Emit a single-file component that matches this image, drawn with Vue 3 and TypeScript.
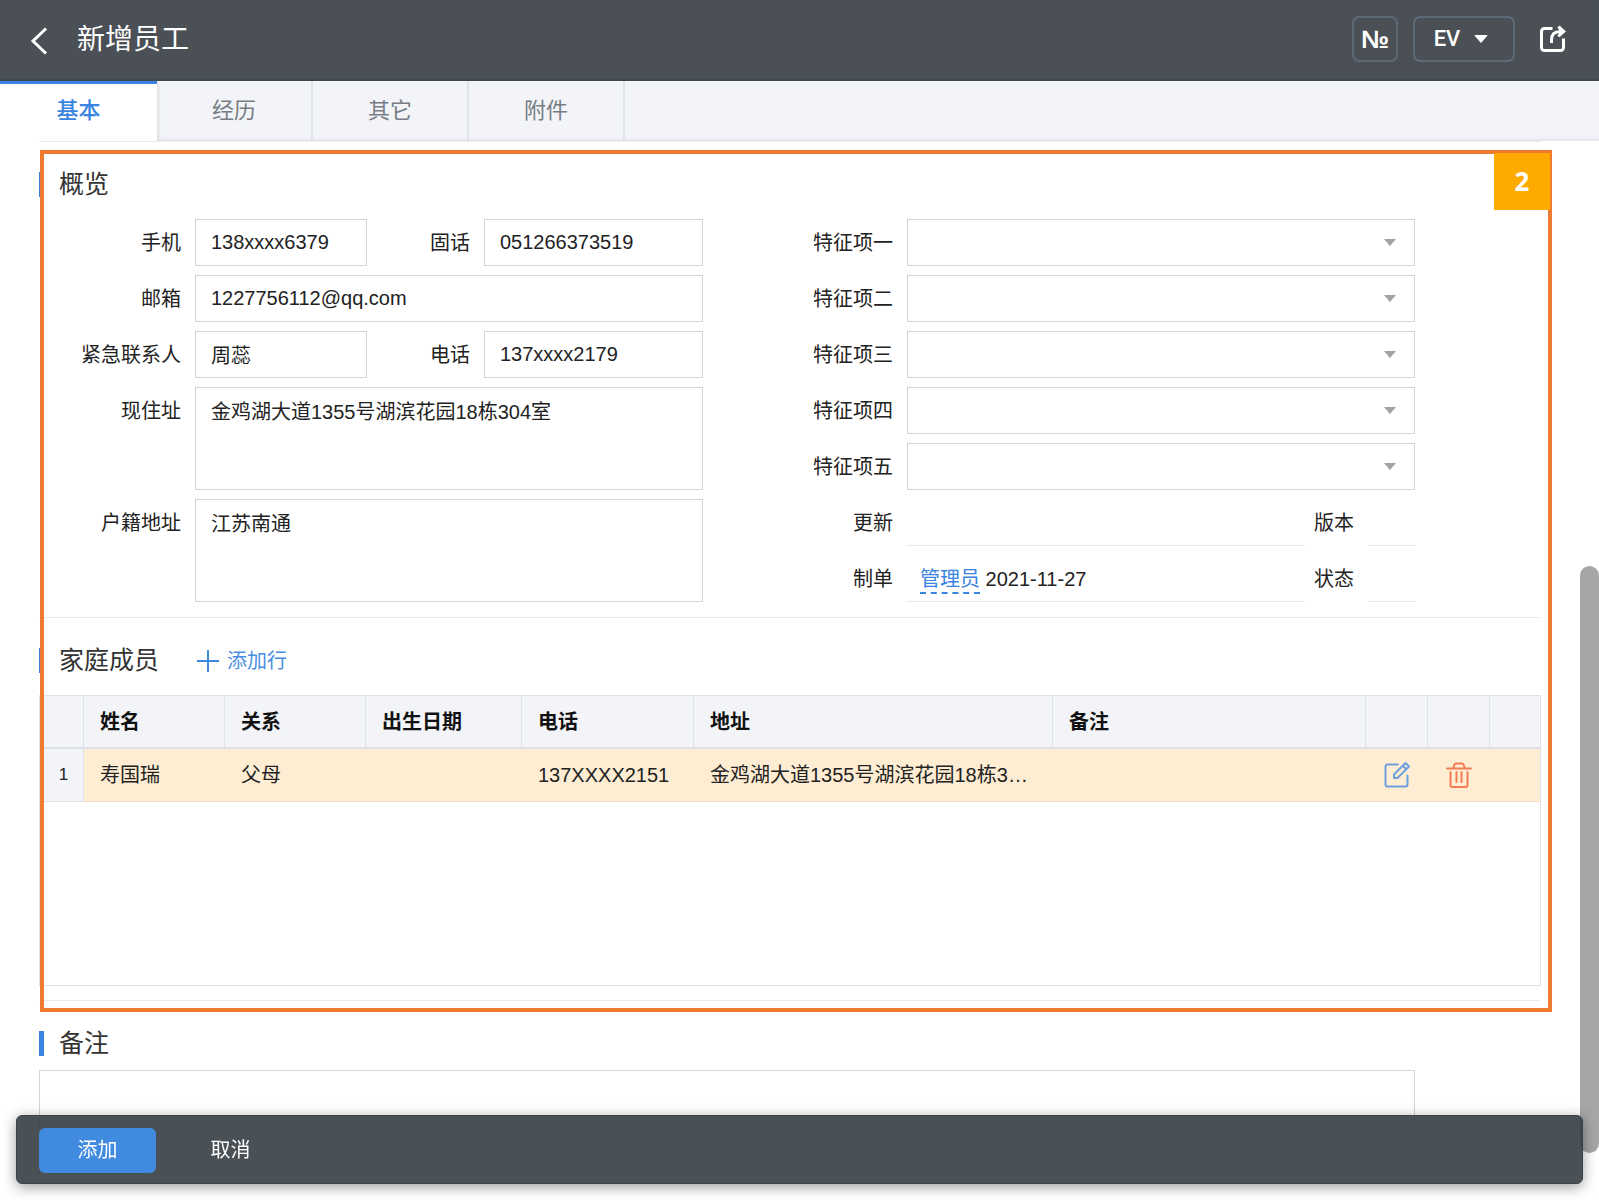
<script setup lang="ts">
import { ref } from 'vue'

interface Member {
  name: string
  relation: string
  birthday: string
  phone: string
  address: string
  remark: string
}

const tabs: string[] = ['基本', '经历', '其它', '附件']
const activeTab = ref(0)

const form = ref({
  mobile: '138xxxx6379',
  landline: '051266373519',
  email: '1227756112@qq.com',
  contact: '周蕊',
  contactPhone: '137xxxx2179',
  address: '金鸡湖大道1355号湖滨花园18栋304室',
  household: '江苏南通',
  remark: '',
})

const features: string[] = ['特征项一', '特征项二', '特征项三', '特征项四', '特征项五']

const members = ref<Member[]>([
  {
    name: '寿国瑞',
    relation: '父母',
    birthday: '',
    phone: '137XXXX2151',
    address: '金鸡湖大道1355号湖滨花园18栋304室',
    remark: '',
  },
])

function addMember(): void {
  members.value.push({ name: '', relation: '', birthday: '', phone: '', address: '', remark: '' })
}

function removeMember(index: number): void {
  members.value.splice(index, 1)
}
</script>

<template>
  <div class="page">
    <header class="topbar">
      <button class="icon-btn back" type="button" aria-label="返回">
        <svg width="18" height="28" viewBox="0 0 18 28"><path d="M16 1.500 3 14l13 12.500" fill="none" stroke="#fff" stroke-width="3" /></svg>
      </button>
      <h1>新增员工</h1>
      <button class="outline-btn number" type="button">№</button>
      <button class="outline-btn event" type="button">
        EV
        <svg width="14" height="8" viewBox="0 0 14 8"><path d="M1 0.500h12L7 7.500z" fill="#fff" stroke="#fff" stroke-linejoin="round" /></svg>
      </button>
      <button class="icon-btn share" type="button" aria-label="分享">
        <svg width="28" height="28" viewBox="0 0 28 28" fill="none" stroke="#fff" stroke-width="3">
          <path d="M13.500 3.500H5.500a3 3 0 0 0-3 3v16a3 3 0 0 0 3 3h16a3 3 0 0 0 3-3V13.500" />
          <path d="M12.500 18v-3q0-8.500 8.500-8.500h3" />
          <path d="M19.500 1.500l3.500 5-3.500 5" />
          <path d="M20.500 0.500v11.500l6.500-5.500z" fill="#fff" stroke="none" />
        </svg>
      </button>
    </header>

    <nav class="tabs">
      <button
        v-for="(tab, i) in tabs"
        :key="tab"
        type="button"
        class="tab"
        :class="{ active: i === activeTab }"
        @click="activeTab = i"
      >{{ tab }}</button>
    </nav>

    <main class="content">
      <div class="highlighted">
        <section class="section">
          <h2>概览</h2>
          <form class="overview" @submit.prevent>
            <div class="col left">
              <label for="mobile">手机</label>
              <div class="pair">
                <input id="mobile" v-model="form.mobile" type="text" />
                <label for="landline">固话</label>
                <input id="landline" v-model="form.landline" type="text" />
              </div>
              <label for="email">邮箱</label>
              <input id="email" v-model="form.email" type="text" />
              <label for="contact">紧急联系人</label>
              <div class="pair">
                <input id="contact" v-model="form.contact" type="text" />
                <label for="contact-phone">电话</label>
                <input id="contact-phone" v-model="form.contactPhone" type="text" />
              </div>
              <label for="address">现住址</label>
              <textarea id="address" v-model="form.address"></textarea>
              <label for="household">户籍地址</label>
              <textarea id="household" v-model="form.household"></textarea>
            </div>

            <div class="col right">
              <template v-for="(feature, i) in features" :key="feature">
                <label :for="'feature-' + i">{{ feature }}</label>
                <div class="select">
                  <select :id="'feature-' + i"></select>
                  <svg width="12" height="7" viewBox="0 0 12 7"><path d="M0 0h12L6 7z" fill="#a3a3a3" /></svg>
                </div>
              </template>
              <span class="label">更新</span>
              <div class="trace">
                <span class="value"></span>
                <span class="label">版本</span>
                <span class="value"></span>
              </div>
              <span class="label">制单</span>
              <div class="trace">
                <span class="value"><a href="#">管理员</a> 2021-11-27</span>
                <span class="label">状态</span>
                <span class="value"></span>
              </div>
            </div>
          </form>
        </section>

        <section class="section">
          <div class="heading">
            <h2>家庭成员</h2>
            <button class="add-row" type="button" @click="addMember">
              <svg width="22" height="22" viewBox="0 0 22 22"><path d="M11 0v22M0 11h22" stroke="#4089e0" stroke-width="2" /></svg>
              添加行
            </button>
          </div>
          <div class="grid">
            <table>
              <colgroup>
                <col class="c-index" />
                <col class="c-name" />
                <col class="c-name" />
                <col class="c-date" />
                <col class="c-phone" />
                <col class="c-address" />
                <col />
                <col class="c-action" />
                <col class="c-action" />
                <col class="c-tail" />
              </colgroup>
              <thead>
                <tr>
                  <th></th>
                  <th>姓名</th>
                  <th>关系</th>
                  <th>出生日期</th>
                  <th>电话</th>
                  <th>地址</th>
                  <th>备注</th>
                  <th></th>
                  <th></th>
                  <th></th>
                </tr>
              </thead>
              <tbody>
                <tr v-for="(m, i) in members" :key="i">
                  <td class="index">{{ i + 1 }}</td>
                  <td>{{ m.name }}</td>
                  <td>{{ m.relation }}</td>
                  <td>{{ m.birthday }}</td>
                  <td>{{ m.phone }}</td>
                  <td>{{ m.address }}</td>
                  <td>{{ m.remark }}</td>
                  <td class="action">
                    <button class="icon-btn" type="button" aria-label="编辑">
                      <svg width="28" height="28" viewBox="0 0 28 28" fill="none" stroke="#6aa0dc" stroke-width="2" stroke-linecap="round" stroke-linejoin="round">
                        <path d="M15 3.500H4.500a2 2 0 0 0-2 2v18a2 2 0 0 0 2 2h18a2 2 0 0 0 2-2V14.500" />
                        <path d="M22.500 2 26 5.500 14.500 17H11v-3.500zM19.800 4.700l3.500 3.500" />
                      </svg>
                    </button>
                  </td>
                  <td class="action">
                    <button class="icon-btn" type="button" aria-label="删除" @click="removeMember(i)">
                      <svg width="28" height="28" viewBox="0 0 28 28" fill="none" stroke="#f47c54" stroke-width="2" stroke-linecap="round" stroke-linejoin="round">
                        <path d="M2 7.500h24M8 7.500l1.500-4a1.500 1.500 0 0 1 1.500-1h6a1.500 1.500 0 0 1 1.500 1l1.500 4M5.500 11v13a2 2 0 0 0 2 2h13a2 2 0 0 0 2-2V11M11.500 11v10M16.500 11v10" />
                      </svg>
                    </button>
                  </td>
                  <td></td>
                </tr>
              </tbody>
            </table>
          </div>
        </section>
        <div class="frame"><span class="badge">2</span></div>
      </div>

      <section class="section">
        <h2><label for="remark">备注</label></h2>
        <textarea id="remark" v-model="form.remark" class="remark"></textarea>
      </section>
    </main>

    <div class="scroll-thumb"></div>

    <footer class="actions">
      <button class="primary" type="button">添加</button>
      <button type="button">取消</button>
    </footer>
  </div>
</template>

<style>
body {
  margin: 0;
  background: #fff;
}
</style>

<style scoped>
* {
  box-sizing: border-box;
}

.page {
  position: relative;
  min-height: 100vh;
  color: #222;
  font: 20px/30px "Liberation Sans", "Noto Sans CJK SC", sans-serif;
}

button,
input,
select,
textarea {
  margin: 0;
  font: inherit;
  color: inherit;
}

button {
  border: 0;
  background: none;
  cursor: pointer;
}

h1,
h2 {
  margin: 0;
  font-weight: 400;
}

.icon-btn {
  display: flex;
  padding: 0;
}

.topbar {
  display: flex;
  align-items: center;
  height: 81px;
  padding: 0 32px 4px 30px;
  background: #4a5056;
  box-shadow: inset 0 -2px 1px #3f464c;
  color: #fff;
}

.back {
  margin-top: 4px;
}

.topbar h1 {
  flex: 1;
  margin-left: 29px;
  padding-top: 2px;
  font-size: 28px;
  line-height: 40px;
}

.outline-btn {
  display: flex;
  align-items: center;
  justify-content: center;
  height: 46px;
  padding: 0;
  border: 2px solid #5c6a78;
  border-radius: 7px;
}

.number {
  width: 46px;
  font-size: 25px;
  font-weight: 700;
}

.event {
  gap: 14px;
  width: 102px;
  margin: 0 24px 0 15px;
  padding-right: 6px;
  font-family: Roboto, sans-serif;
  font-size: 22px;
  font-weight: 500;
}

.tabs {
  display: flex;
  height: 60px;
  background: #f2f4f8;
  box-shadow: inset 0 -4px 3px -2px #e3e5ea;
}

.tab {
  width: 156px;
  padding: 0;
  border-right: 2px solid #e1e3ea;
  color: #777d84;
  font-size: 22px;
}

.tab:first-child {
  width: 157px;
}

.tab.active {
  padding-bottom: 3px;
  border-top: 3px solid #3884e0;
  border-right: 0;
  background: #fff;
  box-shadow: 1px 0 4px #d5d8de;
  clip-path: inset(0 -6px 0 0);
  color: #3884e0;
  font-weight: 500;
}

.content {
  padding: 0 58px 0 39px;
}

.highlighted {
  position: relative;
}

.section {
  padding: 26px 0 15px;
  border-top: 1px solid #ececec;
}

.content > .section {
  padding-bottom: 0;
}

.highlighted .section:nth-child(2) {
  padding-bottom: 14px;
}

.section h2 {
  display: flex;
  align-items: center;
  gap: 15px;
  font-size: 25px;
  line-height: 32px;
  color: #333;
}

.section h2::before {
  content: "";
  width: 5px;
  height: 25px;
  background: #3884e0;
}

.heading {
  display: flex;
  align-items: center;
}

.add-row {
  display: flex;
  align-items: center;
  gap: 8px;
  margin-left: 38px;
  padding: 2px 0 0;
  color: #4a8fe2;
}

.overview {
  display: flex;
  margin: 19px 126px 0 0;
}

.col {
  display: grid;
  align-content: start;
  row-gap: 9px;
}

.left {
  flex: 1 1 156px;
  grid-template-columns: 156px 1fr;
}

.right {
  flex: 1 1 204px;
  grid-template-columns: 204px 1fr;
}

.overview label,
.label {
  padding: 2px 14px 0 0;
  text-align: right;
  line-height: 45px;
}

.pair {
  display: grid;
  grid-template-columns: 172fr 117px 219fr;
}

input,
select,
textarea {
  display: block;
  width: 100%;
  min-width: 0;
  height: 47px;
  padding: 0 15px;
  border: 1px solid #d4d4d4;
  border-radius: 0;
  background: #fff;
  outline: 0;
}

textarea {
  height: 103px;
  padding-top: 9px;
  resize: none;
}

.select {
  position: relative;
}

select {
  appearance: none;
}

.select svg {
  position: absolute;
  top: 20px;
  right: 19px;
  pointer-events: none;
}

.trace {
  display: grid;
  grid-template-columns: 1fr 63px 47px;
  height: 47px;
}

.value {
  padding: 2px 0 0 13px;
  border-bottom: 1px solid #e6e6e6;
  line-height: 44px;
}

.value a {
  padding-bottom: 2px;
  border-bottom: 2px dashed #3884e0;
  color: #3884e0;
  text-decoration: none;
}

.grid {
  height: 291px;
  margin-top: 19px;
  border: 1px solid #dfe1ea;
}

table {
  width: 100%;
  table-layout: fixed;
  border-collapse: separate;
  border-spacing: 0;
}

.c-index { width: 44px; }
.c-name { width: 141px; }
.c-date { width: 156px; }
.c-phone { width: 172px; }
.c-address { width: 359px; }
.c-action { width: 62px; }
.c-tail { width: 50px; }

th,
td {
  height: 53px;
  padding: 0 16px;
  border-right: 1px solid #dfe1ea;
  border-bottom: 2px solid #dfe1ea;
  overflow: hidden;
  text-align: left;
  text-overflow: ellipsis;
  white-space: nowrap;
}

th {
  background: #f2f4f8;
  color: #111;
  font-weight: 700;
}

td {
  border-right-color: #feedd3;
  border-bottom: 1px solid #f1dfc4;
  background: #feedd3;
}

th:last-child,
td:last-child {
  border-right: 0;
}

.index {
  padding: 0 0 0 4px;
  border-right-color: #dfe1ea;
  border-bottom-color: #dfe1ea;
  background: #f2f4f8;
  font-size: 17px;
  text-align: center;
}

.action .icon-btn {
  margin: 0 auto;
}

.action {
  padding: 0;
}

.frame {
  position: absolute;
  inset: 9px -11px -12px 1px;
  border: 4px solid #f07a30;
  pointer-events: none;
}

.badge {
  position: absolute;
  top: -1px;
  right: -2px;
  width: 56px;
  height: 57px;
  background: #ffaa00;
  color: #fff;
  font: 700 26px/57px "Noto Sans", sans-serif;
  text-align: center;
}

.remark {
  width: auto;
  min-width: calc(100% - 126px);
  margin-top: 11px;
}

.scroll-thumb {
  position: absolute;
  top: 566px;
  right: 0;
  bottom: 47px;
  width: 19px;
  border-radius: 10px;
  background: #a6a6a6;
}

.actions {
  position: fixed;
  right: 16px;
  bottom: 16px;
  left: 16px;
  display: flex;
  align-items: center;
  gap: 16px;
  height: 69px;
  padding: 1px 22px 0;
  border: 1px solid #3c444b;
  border-radius: 6px;
  background: rgba(51, 59, 66, 0.89);
  box-shadow: 0 3px 14px rgba(0, 0, 0, 0.4);
}

.actions button {
  width: 117px;
  height: 45px;
  padding: 0;
  border-radius: 6px;
  color: #fff;
}

.actions .primary {
  background: #408ae0;
}
</style>
